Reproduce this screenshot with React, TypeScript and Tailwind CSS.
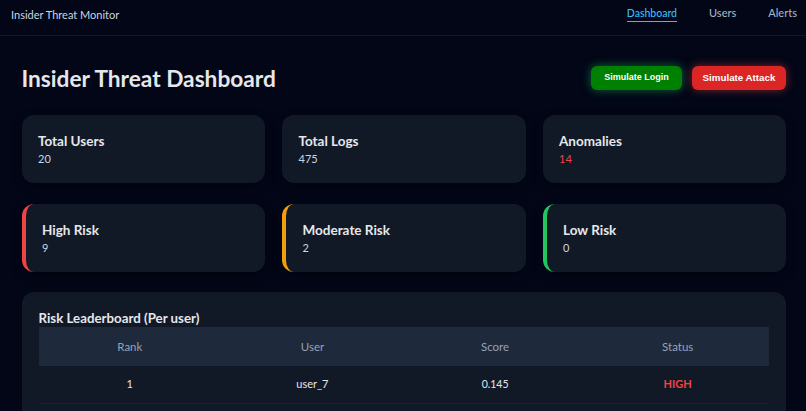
import React from "react";

const font = { fontFamily: 'Lato, "Open Sans", sans-serif' };

const StatCard = ({ title, value, valueClass = "text-[#cbd5e1]" }: { title: string; value: string; valueClass?: string }) => (
  <div className="flex h-[68px] flex-col justify-center rounded-[12px] bg-[#121926] pl-[16.5px] shadow-[0_4px_12px_rgba(0,0,0,0.3)]">
    <div className="text-[13.5px] leading-[18px] font-bold text-[#e5e7eb]">{title}</div>
    <div className={`mt-[1px] text-[11px] leading-[16px] ${valueClass}`}>{value}</div>
  </div>
);

const RiskCard = ({ title, value, border }: { title: string; value: string; border: string }) => (
  <div className={`flex h-[68px] flex-col justify-center rounded-[12px] border-l-[4px] bg-[#121926] pt-[1px] pl-[16.5px] shadow-[0_4px_12px_rgba(0,0,0,0.3)] ${border}`}>
    <div className="text-[13.5px] leading-[18px] font-bold text-[#e5e7eb]">{title}</div>
    <div className="mt-[1px] text-[11px] leading-[16px] text-[#cbd5e1]">{value}</div>
  </div>
);

export default function App() {
  return (
    <div className="h-[411px] w-[806px] overflow-hidden bg-[#020617] text-[#e5e7eb]" style={font}>
      <nav className="flex h-[36px] items-center justify-between border-b border-[#111827] pr-[9px] pl-[11px]">
        <span className="pb-[5px] text-[11px] text-[#cbd5e1]">Insider Threat Monitor</span>
        <div className="flex items-center gap-[32px] pb-[7px] text-[11px] font-medium text-[#a3b0c2]">
          <span className="border-b-[1px] border-[#38bdf8] text-[10.5px] text-[#38bdf8]">Dashboard</span>
          <span className="pb-[1px]">Users</span>
          <span className="pb-[1px]">Alerts</span>
        </div>
      </nav>
      <main className="pr-[20px] pl-[21.5px]">
        <div className="flex h-[79px] items-center justify-between pt-[7px]">
          <h1 className="text-[22.7px] font-bold text-[#e5e7eb]">Insider Threat Dashboard</h1>
          <div className="mb-[2px] flex gap-[10px] font-['Liberation_Sans',sans-serif] font-bold text-white">
            <button className="h-[24px] w-[91px] rounded-[6px] bg-[#008000] text-[9px] shadow-[0_0_10px_rgba(34,197,94,0.5)]">Simulate Login</button>
            <button className="h-[24px] w-[94px] rounded-[6px] bg-[#dc2626] text-[9.75px] shadow-[0_0_10px_rgba(239,68,68,0.5)]">Simulate Attack</button>
          </div>
        </div>
        <div className="grid grid-cols-3 gap-[17px]">
          <StatCard title="Total Users" value="20" />
          <StatCard title="Total Logs" value="475" />
          <StatCard title="Anomalies" value="14" valueClass="text-[#ef4444]" />
        </div>
        <div className="mt-[20.5px] grid grid-cols-3 gap-[17px]">
          <RiskCard title="High Risk" value="9" border="border-[#ef4444]" />
          <RiskCard title="Moderate Risk" value="2" border="border-[#f59e0b]" />
          <RiskCard title="Low Risk" value="0" border="border-[#22c55e]" />
        </div>
        <section className="mt-[20.5px] rounded-[12px] bg-[#121926] px-[17px] pt-[17px] pb-[20px]">
          <h2 className="text-[13.3px] leading-[18px] font-bold text-[#e5e7eb]">Risk Leaderboard (Per user)</h2>
          <table className="w-full table-fixed border-collapse text-center text-[11px]">
            <thead>
              <tr className="h-[38.5px] bg-[#1e293b] text-[#94a3b8]">
                <th className="text-[11.5px] font-normal">Rank</th>
                <th className="text-[11.5px] font-normal">User</th>
                <th className="text-[11.5px] font-normal">Score</th>
                <th className="text-[11.5px] font-normal">Status</th>
              </tr>
            </thead>
            <tbody>
              <tr className="h-[38px] border-b border-[#1a2231] text-[#e5e7eb]">
                <td>1</td>
                <td>user_7</td>
                <td className="pt-[1px] text-[10.5px]">0.145</td>
                <td className="font-bold text-[#ef4444]">HIGH</td>
              </tr>
            </tbody>
          </table>
        </section>
      </main>
    </div>
  );
}
